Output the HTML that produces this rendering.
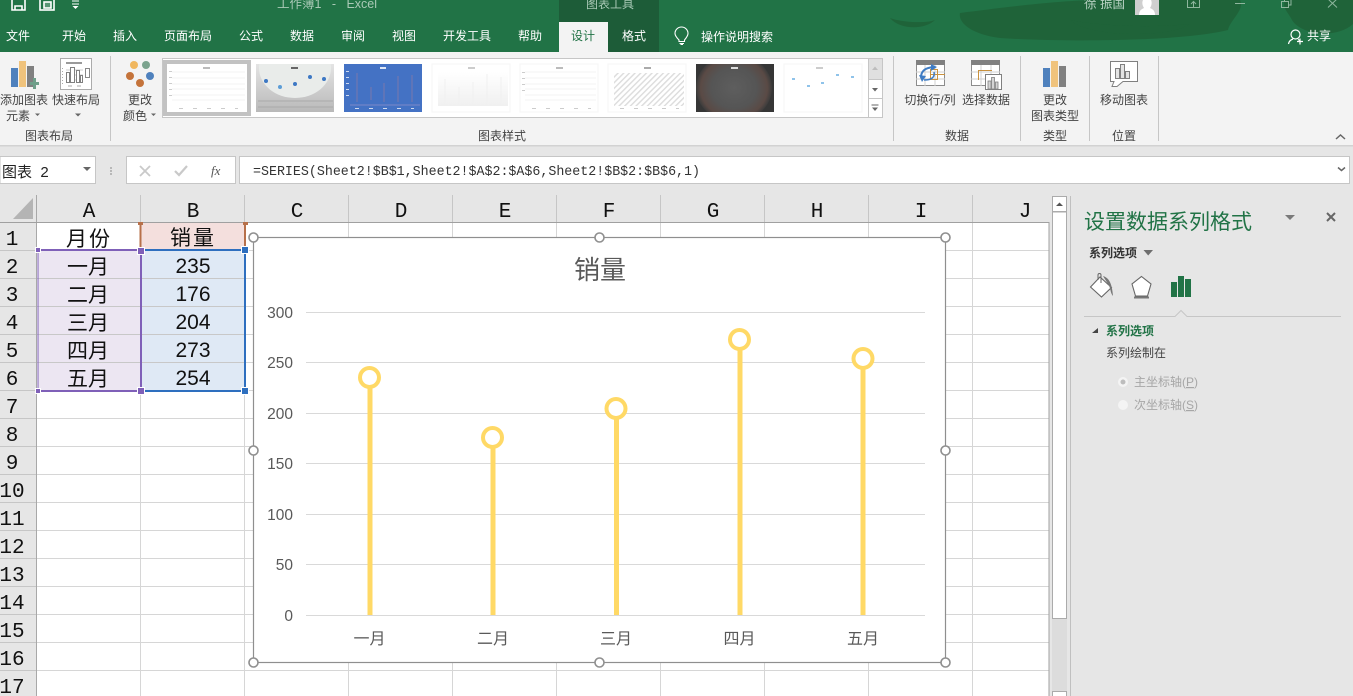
<!DOCTYPE html>
<html lang="zh"><head><meta charset="utf-8"><title>Excel</title>
<style>
html,body{margin:0;padding:0;width:1353px;height:696px;overflow:hidden;background:#e6e6e6}
svg{display:block}
text{font-family:"Liberation Sans","Noto Sans CJK SC",sans-serif}
.t{font-size:12px;fill:#fff;text-anchor:middle}
.r{font-size:12px;fill:#444;text-anchor:middle}
.g{font-size:12px;fill:#444;text-anchor:middle}
.h{font-family:"Liberation Mono","Noto Sans CJK SC",monospace;font-size:21px;fill:#111;text-anchor:middle}
.c{font-size:21px;fill:#111;text-anchor:middle}
.a{font-size:15.5px;fill:#595959;text-anchor:end}
.x{font-size:16px;fill:#595959;text-anchor:middle}
.f{font-family:"Liberation Mono",monospace;font-size:14.2px;fill:#333}
</style></head><body>
<svg xmlns="http://www.w3.org/2000/svg" width="1353" height="696" viewBox="0 0 1353 696">
<defs>
<linearGradient id="gr" x1="0" y1="0" x2="0" y2="1"><stop offset="0" stop-color="#e4e4e4"/><stop offset="1" stop-color="#b9b9b9"/></linearGradient>
<radialGradient id="dk"><stop offset="0" stop-color="#5e5e5e"/><stop offset=".6" stop-color="#555"/><stop offset=".88" stop-color="#5a4a45"/><stop offset="1" stop-color="#3c3c3c"/></radialGradient>
<linearGradient id="wg" x1="0" y1="0" x2="0" y2="1"><stop offset="0" stop-color="#fff"/><stop offset="1" stop-color="#f0f0f0"/></linearGradient>
<pattern id="hatch" width="4" height="4" patternUnits="userSpaceOnUse" patternTransform="rotate(45)"><rect width="4" height="4" fill="#fff"/><rect width="1.4" height="4" fill="#dcdcdc"/></pattern>
<clipPath id="c2"><rect x="256" y="64" width="78" height="48"/></clipPath>
<clipPath id="c7"><rect x="696" y="64" width="78" height="48"/></clipPath>
</defs>

<!-- title bar -->
<rect width="1353" height="52" fill="#217346"/>
<g fill="#1f6339">
<path d="M960 13C1000 8 1060 0 1100 0L1240 0C1245 10 1230 20 1228 30C1180 42 1060 42 1000 38C970 34 958 22 960 13Z"/>
<path d="M1285 0L1353 0V24C1335 40 1300 34 1292 20C1288 12 1282 8 1285 0Z"/>
<path d="M890 18C900 22 925 24 935 20C925 30 900 30 890 18Z"/>
<path d="M1070 20C1100 26 1150 28 1190 24C1170 38 1090 38 1070 20Z"/>
</g>
<rect x="559" y="0" width="100" height="22" fill="#1d5c38"/>
<rect x="608" y="22" width="51" height="30" fill="#1d5c38"/>
<rect x="559" y="22" width="49" height="30" fill="#f3f3f3"/>
<!-- QAT -->
<g fill="none" stroke="#fff" stroke-width="1.6">
<path d="M12 -2V10H25V-2"/><path d="M15 10V6H22V10"/>
<rect x="40" y="-2" width="14" height="12"/><rect x="44" y="2" width="7" height="6" fill="#fff" fill-opacity=".25"/>
</g>
<path d="M72 1H79M72 4H79" stroke="#fff"/><path d="M72.5 6H78.5L75.5 9Z" fill="#fff"/>
<text x="277" y="8" font-size="12.5" fill="#a9c9b6" xml:space="preserve" style="white-space:pre">工作簿1   -   Excel</text>
<text x="610" y="8" font-size="12" fill="#a9c9b6" text-anchor="middle">图表工具</text>
<text x="1084" y="8" font-size="12.5" fill="#b9d2c3">徐 振国</text>
<rect x="1135" y="0" width="24" height="15" fill="#cfcfcf"/>
<path d="M1139 15C1139 10 1142 9 1144 8C1142 5 1142 2 1143 0H1151C1152 2 1152 5 1150 8C1152 9 1155 10 1155 15Z" fill="#fff"/>
<g fill="none" stroke="#8fb69e" stroke-width="1">
<path d="M1187.500 0V7.500H1199.500V0M1193.500 7V2M1191 4L1193.500 1.500L1196 4"/>
<path d="M1235 3.500H1245"/>
<path d="M1281.500 1.500H1288.500V7.500H1281.500ZM1284.500 1.500V-2H1291V5H1288.500"/>
<path d="M1328 -1L1337 7.500M1337 -1L1328 7.500"/>
</g>
<!-- tabs -->
<text class="t" x="18" y="40">文件</text>
<text class="t" x="74" y="40">开始</text>
<text class="t" x="125" y="40">插入</text>
<text class="t" x="188" y="40">页面布局</text>
<text class="t" x="251" y="40">公式</text>
<text class="t" x="302" y="40">数据</text>
<text class="t" x="353" y="40">审阅</text>
<text class="t" x="404" y="40">视图</text>
<text class="t" x="467" y="40">开发工具</text>
<text class="t" x="530" y="40">帮助</text>
<text class="t" x="583" y="40" style="fill:#217346">设计</text>
<text class="t" x="634" y="40">格式</text>
<g fill="none" stroke="#fff" stroke-width="1.100">
<path d="M679 40C676 37 675 35 675 33.500A6.500 6.500 0 0 1 688 33.500C688 35 687 37 684.500 40V41.500H679Z"/>
<path d="M679.500 43.500H684M680.500 44.500H683"/>
</g>
<text class="t" x="737" y="41">操作说明搜索</text>
<g fill="none" stroke="#fff" stroke-width="1.200">
<circle cx="1295.500" cy="34.500" r="4.500"/><path d="M1288.500 44C1289 40.500 1291.500 39.500 1293 39M1298 39.500C1299 40 1299.500 40 1300 41"/><path d="M1297 41.500H1303M1300 38.500V44.500"/>
</g>
<text class="t" x="1319" y="40">共享</text>

<!-- ribbon -->
<rect y="52" width="1353" height="93" fill="#f3f3f3"/>
<rect y="145" width="1353" height="1.500" fill="#d2d2d2"/>
<rect y="146.500" width="1353" height="50" fill="#e6e6e6"/>
<g stroke="#c6c6c6" stroke-width="1">
<path d="M110.500 56V141M893.500 56V141M1020.500 56V141M1089.500 56V141M1158.500 56V141"/>
</g>
<!-- add chart element -->
<rect x="11" y="68" width="7" height="19" fill="#4f81bd"/>
<rect x="19" y="61" width="7" height="26" fill="#f0c37c"/>
<rect x="27" y="66" width="7" height="21" fill="#808080"/>
<path d="M30 82H33V78H36V82H39V85H36V89H33V85H30Z" fill="#6f9f8a"/>
<!-- quick layout -->
<rect x="60.500" y="58.500" width="31" height="31" fill="#fff" stroke="#ababab"/>
<path d="M66 63H82" stroke="#9a9a9a" stroke-width="2"/>
<path d="M66 70H83M66 75H83M66 80H83" stroke="#ccc"/>
<path d="M62.500 68V84" stroke="#aaa" stroke-dasharray="1 2"/>
<g fill="#fff" stroke="#808080"><rect x="66.500" y="72.500" width="3" height="10"/><rect x="70.500" y="67.500" width="4" height="15"/><rect x="76.500" y="70.500" width="3" height="12"/><rect x="80.500" y="75.500" width="2" height="7"/></g>
<rect x="85.500" y="68.500" width="4" height="9" fill="#fff" stroke="#888"/>
<path d="M68 86H72M77 86H81" stroke="#aaa"/>
<text class="r" x="24" y="104">添加图表</text>
<text class="r" x="18" y="120">元素</text><path d="M35 113.500H40L37.500 116Z" fill="#666"/>
<text class="r" x="76" y="104">快速布局</text><path d="M75 113.500H81L78 116.500Z" fill="#666"/>
<text class="g" x="49" y="140">图表布局</text>
<!-- colors -->
<circle cx="134" cy="65" r="4" fill="#f0b75f"/><circle cx="146" cy="65" r="4" fill="#7ba38e"/>
<circle cx="130" cy="76" r="4" fill="#c4733a"/><circle cx="150" cy="76" r="4" fill="#4f81bd"/><circle cx="140" cy="83" r="4" fill="#c4733a"/>
<text class="r" x="140" y="104">更改</text><text class="r" x="135" y="120">颜色</text><path d="M151 113.500H156L153.500 116Z" fill="#666"/>

<!-- gallery -->
<rect x="162.500" y="58.500" width="720" height="59" fill="#fff" stroke="#c6c6c6"/>
<rect x="163" y="60" width="88" height="56" fill="#c2c2c2"/>
<rect x="167" y="64" width="80" height="48" fill="#fff"/>
<g stroke="#f3f3f3"><path d="M172 72H245M172 78H245M172 84H245M172 89H245M172 95H245M172 100H245"/></g><rect x="203" y="67" width="7" height="2" fill="#bbb"/>
<g fill="#ccc"><rect x="169" y="71" width="3" height="1"/><rect x="169" y="77" width="3" height="1"/><rect x="169" y="83" width="3" height="1"/><rect x="169" y="89" width="3" height="1"/><rect x="169" y="95" width="3" height="1"/><rect x="179" y="108" width="4" height="1"/><rect x="193" y="108" width="4" height="1"/><rect x="207" y="108" width="4" height="1"/><rect x="221" y="108" width="4" height="1"/><rect x="235" y="108" width="3" height="1"/></g>

<rect x="256" y="64" width="78" height="48" fill="url(#gr)"/>
<g clip-path="url(#c2)"><ellipse cx="295" cy="68" rx="36" ry="30" fill="#e9ecea"/></g>
<path d="M258 101H333M258 107H333" stroke="#a9a9a9"/><rect x="291" y="67" width="7" height="2" fill="#666"/>
<g fill="#3d78c4"><circle cx="266" cy="81" r="2"/><circle cx="280" cy="87" r="2" fill="#5d9dd6"/><circle cx="295" cy="84" r="2"/><circle cx="310" cy="77" r="2"/><circle cx="324" cy="79" r="2"/></g>

<rect x="344" y="64" width="78" height="48" fill="#4472c4"/>
<g stroke="#7a78ad"><path d="M357 73V102M371 87V100M384 83V102M398 76V102M412 75V102"/></g>
<path d="M350 105H420" stroke="#7c88c8"/><rect x="380" y="67" width="6" height="2" fill="#dfe7f6"/>
<g fill="#cfdaf0"><rect x="346" y="71" width="3" height="1"/><rect x="346" y="77" width="3" height="1"/><rect x="346" y="83" width="3" height="1"/><rect x="346" y="89" width="3" height="1"/><rect x="346" y="95" width="3" height="1"/><rect x="355" y="108" width="4" height="1"/><rect x="369" y="108" width="4" height="1"/><rect x="383" y="108" width="4" height="1"/><rect x="397" y="108" width="4" height="1"/><rect x="411" y="108" width="3" height="1"/></g>

<rect x="432" y="64" width="78" height="48" fill="#fff" stroke="#f5f5f5"/>
<rect x="438" y="72" width="70" height="34" fill="url(#wg)"/>
<path d="M445 79V105M459 87V105M473 82V105M487 74V105M501 77V105" stroke="#f0f0f0"/>
<rect x="468" y="67" width="7" height="2" fill="#ccc"/>

<rect x="520" y="64" width="78" height="48" fill="#fff" stroke="#f5f5f5"/>
<path d="M525 72H596M525 78H596M525 84H596M525 89H596M525 95H596M525 100H596" stroke="#f3f3f3"/>
<rect x="556" y="67" width="7" height="2" fill="#bbb"/>
<g fill="#ccc"><rect x="522" y="72" width="3" height="1"/><rect x="522" y="78" width="3" height="1"/><rect x="522" y="84" width="3" height="1"/><rect x="522" y="90" width="3" height="1"/><rect x="532" y="108" width="4" height="1"/><rect x="546" y="108" width="4" height="1"/><rect x="560" y="108" width="4" height="1"/><rect x="574" y="108" width="4" height="1"/><rect x="588" y="108" width="3" height="1"/></g>

<rect x="608" y="64" width="78" height="48" fill="#fff" stroke="#f5f5f5"/>
<rect x="614" y="73" width="70" height="33" fill="url(#hatch)"/>
<rect x="644" y="67" width="7" height="2" fill="#aaa"/>
<g fill="#ccc"><rect x="620" y="108" width="4" height="1"/><rect x="634" y="108" width="4" height="1"/><rect x="648" y="108" width="4" height="1"/><rect x="662" y="108" width="4" height="1"/><rect x="676" y="108" width="3" height="1"/></g>

<rect x="696" y="64" width="78" height="48" fill="#363636"/>
<g clip-path="url(#c7)"><ellipse cx="734" cy="88" rx="38" ry="34" fill="url(#dk)"/></g>
<rect x="731" y="67" width="7" height="2" fill="#ddd"/>

<rect x="784" y="64" width="78" height="48" fill="#fff" stroke="#f5f5f5"/>
<rect x="816" y="67" width="7" height="2" fill="#ccc"/>
<g fill="#8fc3ea"><rect x="792" y="78" width="3" height="2"/><rect x="807" y="85" width="3" height="2"/><rect x="821" y="82" width="3" height="2"/><rect x="836" y="74" width="3" height="2"/><rect x="851" y="76" width="3" height="2"/></g>

<rect x="868" y="59" width="14" height="20" fill="#e0e0e0"/>
<rect x="868" y="79" width="14" height="19" fill="#fff"/><rect x="868" y="98" width="14" height="19" fill="#fff"/>
<path d="M868.500 59V117M868 79.500H882M868 98.500H882" stroke="#c6c6c6"/>
<path d="M872 70H878L875 66.500Z" fill="#bdbdbd"/>
<path d="M872 88H878L875 91.500Z" fill="#666"/>
<path d="M871.500 105H878.500" stroke="#666"/><path d="M872 107.500H878L875 111Z" fill="#666"/>
<text class="g" x="502" y="140">图表样式</text>

<!-- data group -->
<rect x="916.500" y="60.500" width="28" height="25" fill="#fff" stroke="#8c8c8c"/>
<rect x="916" y="60" width="29" height="5" fill="#808080"/>
<path d="M916 72H945M916 79H945M925 65V86M935 65V86" stroke="#d0d0d0"/>
<rect x="930.500" y="69.500" width="7" height="10" fill="none" stroke="#c9923f"/><path d="M930 74.500H945" stroke="#c9923f"/>
<path d="M921 76C922 70 926 68 933 67" fill="none" stroke="#3f7cc4" stroke-width="2"/><path d="M931 64L937 67L931 71Z" fill="#3f7cc4"/>
<path d="M934 72C935 77 932 80 924 80" fill="none" stroke="#3f7cc4" stroke-width="1.500"/><path d="M919 75L926 76L922 82Z" fill="#3f7cc4"/>
<rect x="971.500" y="60.500" width="28" height="25" fill="#fff" stroke="#8c8c8c"/>
<rect x="971" y="60" width="29" height="5" fill="#808080"/>
<path d="M971 72H1000M971 79H1000M981 65V86M991 65V86" stroke="#d0d0d0"/>
<path d="M978.500 80V70.500H992" fill="none" stroke="#c9923f"/>
<rect x="985.500" y="74.500" width="16" height="15" fill="#fff" stroke="#808080"/>
<g fill="#d4d4d4" stroke="#808080" stroke-width=".8"><rect x="988" y="81" width="3" height="8"/><rect x="991.500" y="77.500" width="3" height="11.500"/><rect x="995.500" y="82" width="2.500" height="7"/></g>
<text class="r" x="930" y="104">切换行/列</text>
<text class="r" x="986" y="104">选择数据</text>
<text class="g" x="957" y="140">数据</text>
<!-- chart type -->
<rect x="1043" y="68" width="7" height="19" fill="#4f81bd"/><rect x="1051" y="61" width="7" height="26" fill="#f0c37c"/><rect x="1059" y="66" width="7" height="21" fill="#808080"/>
<text class="r" x="1055" y="104">更改</text><text class="r" x="1055" y="120">图表类型</text>
<text class="g" x="1055" y="140">类型</text>
<!-- move chart -->
<path d="M1110.500 61.500H1137.500V81.500H1123L1117 86.500H1112L1114 81.500H1110.500Z" fill="#fff" stroke="#808080"/>
<g fill="#e4e4e4" stroke="#808080"><rect x="1115.500" y="68.500" width="4" height="10"/><rect x="1120.500" y="64.500" width="4" height="14"/><rect x="1125.500" y="71.500" width="4" height="7"/></g>
<text class="r" x="1124" y="104">移动图表</text>
<text class="g" x="1124" y="140">位置</text>
<path d="M1336 139L1340.500 135L1345 139" fill="none" stroke="#666" stroke-width="1.500"/>

<!-- formula bar -->
<rect x="0" y="156.500" width="95.500" height="27" fill="#fff" stroke="#c6c6c6"/>
<text x="2" y="177" font-size="15" fill="#222" style="white-space:pre" xml:space="preserve">图表  2</text>
<path d="M83 167H91L87 171Z" fill="#666"/>
<path d="M111 167V169M111 170V172M111 173V175" stroke="#a8a8a8" stroke-width="1.500"/>
<rect x="126.500" y="156.500" width="109" height="27" fill="#fff" stroke="#c6c6c6"/>
<path d="M140 166L150 176M150 166L140 176" stroke="#c9c9c9" stroke-width="1.800" fill="none"/>
<path d="M175 171L179 175L187 166" stroke="#c9c9c9" stroke-width="2.200" fill="none"/>
<text x="211" y="175" font-size="13" font-style="italic" fill="#555" style="font-family:'Liberation Serif',serif">fx</text>
<rect x="239.500" y="156.500" width="1110" height="27" fill="#fff" stroke="#c6c6c6"/>
<text class="f" x="253" y="175" textLength="447" lengthAdjust="spacingAndGlyphs">=SERIES(Sheet2!$B$1,Sheet2!$A$2:$A$6,Sheet2!$B$2:$B$6,1)</text>
<path d="M1338 167.500L1341.500 170.500L1345 167.500" fill="none" stroke="#666" stroke-width="1.500"/>

<!-- sheet -->
<rect x="37" y="223" width="1012" height="473" fill="#fff"/>
<g stroke="#d6d6d6" stroke-width="1">
<path d="M37 250.500H1049M37 278.500H1049M37 306.500H1049M37 334.500H1049M37 362.500H1049M37 390.500H1049M37 418.500H1049M37 446.500H1049M37 474.500H1049M37 502.500H1049M37 530.500H1049M37 558.500H1049M37 586.500H1049M37 614.500H1049M37 642.500H1049M37 670.500H1049"/>
<path d="M140.500 223V696M244.500 223V696M348.500 223V696M452.500 223V696M556.500 223V696M660.500 223V696M764.500 223V696M868.500 223V696M972.500 223V696"/>
</g>
<!-- headers -->
<rect x="0" y="195" width="1049" height="27" fill="#e6e6e6"/>
<rect x="0" y="222" width="36" height="474" fill="#e6e6e6"/>
<path d="M33 198V219H13Z" fill="#b4b4b4"/>
<path d="M36.500 195V696" stroke="#a8a8a8"/>
<path d="M0 222.500H1049" stroke="#a0a0a0"/>
<g stroke="#c6c6c6"><path d="M140.500 195V222M244.500 195V222M348.500 195V222M452.500 195V222M556.500 195V222M660.500 195V222M764.500 195V222M868.500 195V222M972.500 195V222"/>
<path d="M0 250.500H36M0 278.500H36M0 306.500H36M0 334.500H36M0 362.500H36M0 390.500H36M0 418.500H36M0 446.500H36M0 474.500H36M0 502.500H36M0 530.500H36M0 558.500H36M0 586.500H36M0 614.500H36M0 642.500H36M0 670.500H36"/></g>
<g>
<text class="h" x="89" y="217">A</text><text class="h" x="193" y="217">B</text><text class="h" x="297" y="217">C</text><text class="h" x="401" y="217">D</text><text class="h" x="505" y="217">E</text><text class="h" x="609" y="217">F</text><text class="h" x="713" y="217">G</text><text class="h" x="817" y="217">H</text><text class="h" x="921" y="217">I</text><text class="h" x="1025" y="217">J</text>
<text class="h" x="12" y="245">1</text><text class="h" x="12" y="273">2</text><text class="h" x="12" y="301">3</text><text class="h" x="12" y="329">4</text><text class="h" x="12" y="357">5</text><text class="h" x="12" y="385">6</text><text class="h" x="12" y="413">7</text><text class="h" x="12" y="441">8</text><text class="h" x="12" y="469">9</text><text class="h" x="12" y="497">10</text><text class="h" x="12" y="525">11</text><text class="h" x="12" y="553">12</text><text class="h" x="12" y="581">13</text><text class="h" x="12" y="609">14</text><text class="h" x="12" y="637">15</text><text class="h" x="12" y="665">16</text><text class="h" x="12" y="693">17</text>
</g>
<!-- cell fills -->
<rect x="141" y="223" width="104" height="27" fill="#f4dfdd"/>
<rect x="38" y="251" width="103" height="139" fill="#ece6f2"/>
<rect x="141" y="251" width="104" height="139" fill="#dfe9f5"/>
<path d="M38 278.500H245M38 306.500H245M38 334.500H245M38 362.500H245" stroke="#c8c8c8"/>
<text class="c" x="89" y="246" letter-spacing="2">月份</text><text class="c" x="193" y="245" letter-spacing="2">销量</text>
<text class="c" x="88" y="274">一月</text><text class="c" x="193" y="273">235</text>
<text class="c" x="88" y="302">二月</text><text class="c" x="193" y="301">176</text>
<text class="c" x="88" y="330">三月</text><text class="c" x="193" y="329">204</text>
<text class="c" x="88" y="358">四月</text><text class="c" x="193" y="357">273</text>
<text class="c" x="88" y="386">五月</text><text class="c" x="193" y="385">254</text>
<!-- selection borders -->
<path d="M140.500 225V249M245 225V249" stroke="#b7704a" stroke-width="2"/>
<rect x="138" y="222" width="5" height="3" fill="#b7704a"/><rect x="243" y="222" width="5" height="3" fill="#b7704a"/>
<path d="M38 250H140M38 391H140M141 250V391" stroke="#7f60b8" stroke-width="2" fill="none"/>
<path d="M38 251V390" stroke="#7f60b8" stroke-width="1" fill="none"/>
<path d="M143 250H245M143 391H245M245 250V391" stroke="#2e6fbf" stroke-width="2" fill="none"/>
<g fill="#7f60b8" stroke="#fff" stroke-width="1"><rect x="35.500" y="247.500" width="5" height="5"/><rect x="35.500" y="388.500" width="5" height="5"/><rect x="137.500" y="247.500" width="7" height="7"/><rect x="137.500" y="387.500" width="7" height="7"/></g>
<g fill="#2e6fbf" stroke="#fff" stroke-width="1"><rect x="241.500" y="246.500" width="7" height="7"/><rect x="241.500" y="387.500" width="7" height="7"/></g>

<!-- chart -->
<rect x="253.500" y="237.500" width="692" height="425" fill="#fff" stroke="#8f8f8f" stroke-width="1.200"/>
<text x="600" y="279" font-size="26" fill="#595959" text-anchor="middle">销量</text>
<g stroke="#d9d9d9" stroke-width="1"><path d="M306 312.500H925M306 362.500H925M306 413.500H925M306 463.500H925M306 514.500H925M306 564.500H925M306 615.500H925"/></g>
<text class="a" x="293" y="318">300</text><text class="a" x="293" y="368">250</text><text class="a" x="293" y="419">200</text><text class="a" x="293" y="469">150</text><text class="a" x="293" y="520">100</text><text class="a" x="293" y="570">50</text><text class="a" x="293" y="621">0</text>
<text class="x" x="369.500" y="644">一月</text><text class="x" x="493" y="644">二月</text><text class="x" x="616" y="644">三月</text><text class="x" x="739.500" y="644">四月</text><text class="x" x="863" y="644">五月</text>
<g stroke="#ffd966" stroke-width="5" fill="none">
<path d="M370 388V615M493 448V615M616.500 419V615M740 350V615M863 369V615"/>
</g>
<g stroke="#ffd966" stroke-width="4" fill="#fff">
<circle cx="369.500" cy="377.500" r="9.500"/><circle cx="492.500" cy="437.500" r="9.500"/><circle cx="616" cy="408.500" r="9.500"/><circle cx="739.500" cy="339.500" r="9.500"/><circle cx="863" cy="358.500" r="9.500"/>
</g>
<g fill="#fff" stroke="#8f8f8f" stroke-width="1.600">
<circle cx="253.500" cy="237.500" r="4.500"/><circle cx="599.500" cy="237.500" r="4.500"/><circle cx="945.500" cy="237.500" r="4.500"/>
<circle cx="253.500" cy="450.500" r="4.500"/><circle cx="945.500" cy="450.500" r="4.500"/>
<circle cx="253.500" cy="662.500" r="4.500"/><circle cx="599.500" cy="662.500" r="4.500"/><circle cx="945.500" cy="662.500" r="4.500"/>
</g>

<!-- scrollbar -->
<rect x="1049" y="195" width="21" height="501" fill="#e6e6e6"/>
<path d="M1049 222V696" stroke="#a0a0a0"/>
<rect x="1052" y="196" width="15" height="500" fill="#dcdcdc"/>
<rect x="1052.500" y="196.500" width="14" height="15" fill="#fff" stroke="#ababab"/>
<path d="M1056 206H1063L1059.500 202.500Z" fill="#555"/>
<rect x="1052.500" y="212" width="14" height="406.500" fill="#fff" stroke="#ababab"/>
<rect x="1052.500" y="691.500" width="14" height="10" fill="#fff" stroke="#ababab"/>
<path d="M1070.500 196V696" stroke="#c0c0c0"/>

<!-- pane -->
<rect x="1071" y="195" width="282" height="501" fill="#e6e6e6"/>
<text x="1084" y="229" font-size="21" fill="#217346">设置数据系列格式</text>
<path d="M1285 215H1295L1290 220Z" fill="#7a7a7a"/>
<path d="M1327 213L1335 221M1335 213L1327 221" stroke="#666" stroke-width="2"/>
<text x="1089" y="257" font-size="12" font-weight="700" fill="#333">系列选项</text>
<path d="M1143.500 250H1153L1148.200 255.500Z" fill="#6e6e6e"/>
<!-- paint -->
<path d="M1090.500 287L1100 277L1111.500 287.500L1101.500 297Z" fill="#fff" stroke="#666" stroke-width="1.100"/>
<path d="M1098 280V275C1098 273 1101 273 1101 275V283" fill="none" stroke="#666"/>
<path d="M1103 276C1109 278 1112 283 1113 296C1110 293 1111 288 1108 284Z" fill="#777"/>
<!-- pentagon -->
<path d="M1141.500 276.500L1151 284L1147.500 296H1135.500L1132 284Z" fill="#fff" stroke="#666" stroke-width="1.100"/>
<path d="M1134 297.500H1149" stroke="#777" stroke-width="2"/>
<!-- bars -->
<g fill="#217346"><rect x="1171" y="282" width="6" height="15"/><rect x="1178" y="276" width="6" height="21"/><rect x="1185" y="279" width="6" height="18"/></g>
<path d="M1084 316.500H1175L1181 310.500L1187 316.500H1341" fill="none" stroke="#c6c6c6"/>
<path d="M1092 333H1098V328Z" fill="#444"/>
<text x="1106" y="335" font-size="12" font-weight="700" fill="#217346">系列选项</text>
<text x="1106" y="357" font-size="12" fill="#444">系列绘制在</text>
<circle cx="1123" cy="382" r="5" fill="#f4f4f4"/><circle cx="1123" cy="382" r="2.500" fill="#bdbdbd"/>
<text x="1134" y="386" font-size="12" fill="#a6a6a6">主坐标轴(<tspan text-decoration="underline">P</tspan>)</text>
<circle cx="1123" cy="405" r="5" fill="#f4f4f4"/>
<text x="1134" y="409" font-size="12" fill="#a6a6a6">次坐标轴(<tspan text-decoration="underline">S</tspan>)</text>
</svg>
</body></html>
